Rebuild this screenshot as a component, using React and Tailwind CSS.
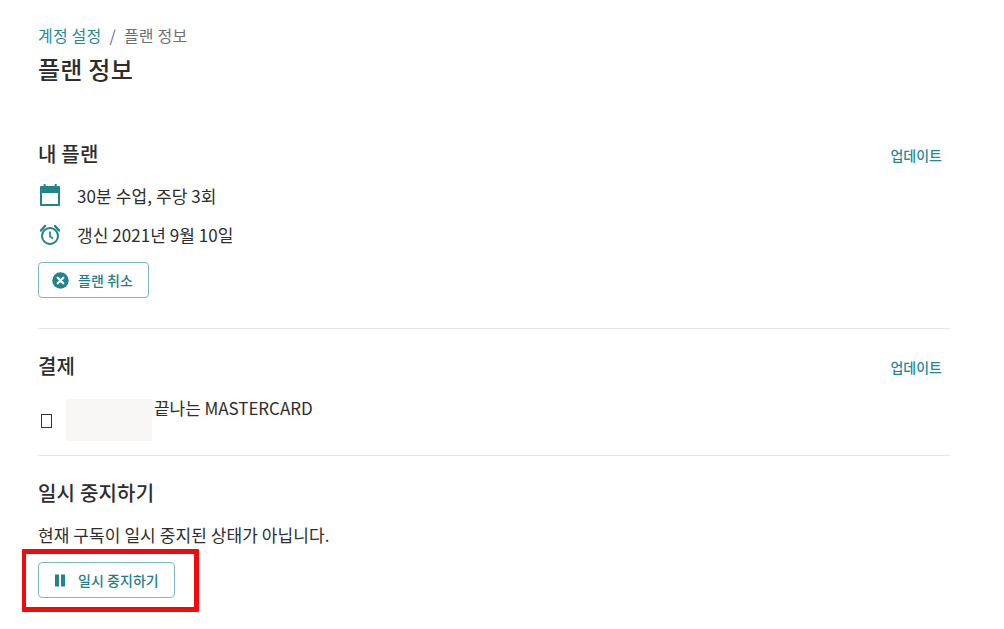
function Calendar() {
  return (
    <svg width="24" height="24" viewBox="0 0 24 24" className="shrink-0">
      <path fill="#23838c" fillRule="evenodd" d="M5.700 0h2v2h9V0h2v2H21a1 1 0 0 1 1 1v18a1 1 0 0 1-1 1H3a1 1 0 0 1-1-1V3a1 1 0 0 1 1-1h2.700zM4 9v11h16V9z" />
    </svg>
  );
}

function Alarm() {
  return (
    <svg width="24" height="24" viewBox="0 0 24 24" fill="none" stroke="#23838c" strokeWidth="2" className="shrink-0">
      <circle cx="12" cy="13" r="8" />
      <path d="M12 8.500v5l3 2" strokeWidth="1.700" />
      <path d="M3 7.500 7 3M21 7.500 17 3" strokeWidth="2.400" strokeLinecap="round" />
    </svg>
  );
}

function CircleX() {
  return (
    <svg width="17" height="17" viewBox="0 0 17 17" className="shrink-0">
      <circle cx="8.500" cy="8.500" r="8.200" fill="#23838c" />
      <path d="M5.700 5.700l5.600 5.600M11.300 5.700l-5.600 5.600" stroke="#fff" strokeWidth="2.200" strokeLinecap="round" />
    </svg>
  );
}

function Pause() {
  return (
    <svg width="17" height="17" viewBox="0 0 17 17" className="shrink-0">
      <rect x="3" y="2.500" width="4" height="12" fill="#23838c" />
      <rect x="9" y="2.500" width="4" height="12" fill="#23838c" />
    </svg>
  );
}

function OutlineButton({ icon, label }) {
  return (
    <button className="flex h-9 items-center rounded-[4px] border border-[#7fb9c0] bg-white pl-[13px] pr-[15px] text-[14px] font-medium leading-[20px] tracking-[0.05px] text-[#1f7f8a]">
      {icon}
      <span className="ml-[9px]">{label}</span>
    </button>
  );
}

function SectionHead({ title, update }) {
  return (
    <div className="flex items-center justify-between">
      <h2 className="text-[20px] font-medium leading-[30px] tracking-[0.2px] text-[#2d2d2d]">{title}</h2>
      {update && <a className="mr-2 mt-px text-[14px] font-medium leading-[20px] text-[#1f8a96]">업데이트</a>}
    </div>
  );
}

export default function App() {
  return (
    <div
      className="relative h-[629px] w-[1004px] overflow-hidden bg-white pl-[38px] pr-[54px] pt-[23px] text-[#2d2d2d]"
      style={{ fontFamily: '"Noto Sans CJK KR", "Noto Sans", sans-serif' }}
    >
      <nav className="flex h-[24px] items-center text-[16px] leading-[24px] tracking-[0.2px] text-[#6f6f6f]">
        <a className="text-[#1f8a96]">계정 설정</a>
        <span className="mx-2">/</span>
        <span>플랜 정보</span>
      </nav>
      <h1 className="mt-[4px] text-[24px] font-medium leading-[36px] tracking-[0.25px] text-[#2d2d2d]">플랜 정보</h1>

      <section className="mt-[52px] border-b border-[#e6e6e6] pb-[30px]">
        <SectionHead title="내 플랜" update />
        <div className="mt-[12px] flex h-[30px] items-center gap-[15px] text-[17px] tracking-[0.1px]">
          <Calendar />
          <span>30분 수업, 주당 3회</span>
        </div>
        <div className="mt-[9px] flex h-[30px] items-center gap-[15px] text-[17px] tracking-[0.05px]">
          <Alarm />
          <span>갱신 2021년 9월 10일</span>
        </div>
        <div className="mt-[12px] flex">
          <OutlineButton icon={<CircleX />} label="플랜 취소" />
        </div>
      </section>

      <section className="border-b border-[#e6e6e6] pt-[22px] pb-[14px]">
        <SectionHead title="결제" update />
        <div className="mt-[18px] flex h-[42px] items-start text-[17px]">
          <span className="mt-[15px] h-[14px] w-[28px]">
            <span className="ml-[3px] block h-[14px] w-[11px] border border-[#333]" />
          </span>
          <span className="h-[42px] w-[86px] bg-[#f9f7f5]" />
          <span className="ml-[2px] leading-[18px] tracking-[-0.05px]">끝나는 MASTERCARD</span>
        </div>
      </section>

      <section className="pt-[22px]">
        <SectionHead title="일시 중지하기" />
        <p className="mt-[15px] text-[17px] leading-[24px] tracking-[0.08px]">현재 구독이 일시 중지된 상태가 아닙니다.</p>
        <div className="mt-[15px] flex">
          <OutlineButton icon={<Pause />} label="일시 중지하기" />
        </div>
      </section>

      <div className="absolute left-[22px] top-[549px] h-[63px] w-[177px] rounded-[1px] border-y-[5px] border-l-4 border-r-[5px] border-[#f20a0a]" />
    </div>
  );
}
